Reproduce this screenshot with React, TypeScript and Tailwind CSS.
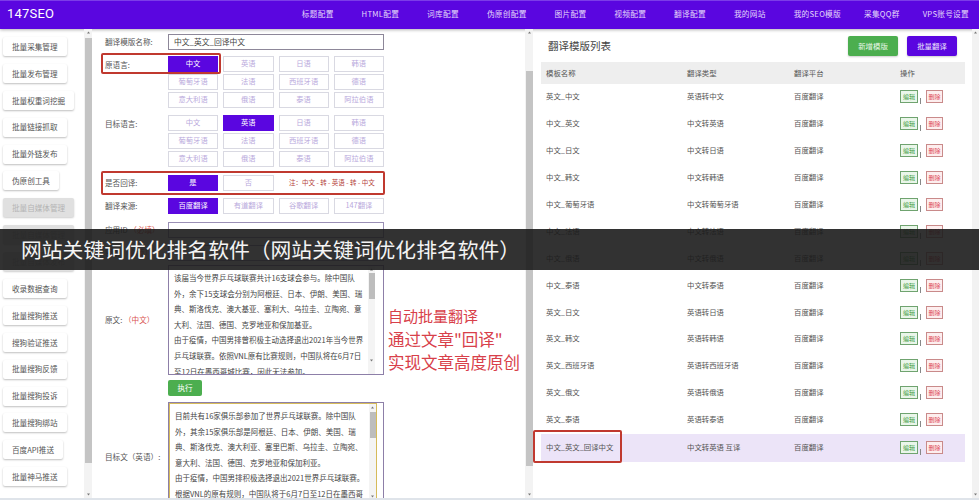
const navItems = [
  { label: "标题配置", className: "" },
  { label: "HTML配置", className: "" },
  { label: "词库配置", className: "" },
  { label: "伪原创配置", className: "" },
  { label: "图片配置", className: "" },
  { label: "视频配置", className: "" },
  { label: "翻译配置", className: "" },
  { label: "我的网站", className: "" },
  { label: "我的SEO模版", className: "" },
  { label: "采集QQ群", className: "-ml-[5px]" },
  { label: "VPS账号设置", className: "-ml-[5px]" },
]

const sideItems = [
  { label: "批量采集管理" },
  { label: "批量发布管理" },
  { label: "批量权重词挖掘" },
  { label: "批量链接抓取" },
  { label: "批量外链发布" },
  { label: "伪原创工具" },
  { label: "批量自媒体管理", off: true },
  { label: "批量自媒体管理", off: true },
  { label: "批量自媒体发布", off: true },
  { label: "收录数据查询" },
  { label: "批量搜狗推送" },
  { label: "搜狗验证推送" },
  { label: "批量搜狗反馈" },
  { label: "批量搜狗投诉" },
  { label: "批量搜狗绑站" },
  { label: "百度API推送" },
  { label: "批量神马推送" },
]

const langs = ["中文", "英语", "日语", "韩语", "葡萄牙语", "法语", "西班牙语", "德语", "意大利语", "俄语", "泰语", "阿拉伯语"]

const rows = [
  ["英文_中文", "英语转中文"],
  ["中文_英文", "中文转英语"],
  ["中文_日文", "中文转日语"],
  ["中文_韩文", "中文转韩语"],
  ["中文_葡萄牙语", "中文转葡萄牙语"],
  ["中文_法语", "中文转法语"],
  ["中文_俄语", "中文转俄语"],
  ["中文_泰语", "中文转泰语"],
  ["英文_日文", "英语转日语"],
  ["英文_韩文", "英语转韩语"],
  ["英文_西班牙语", "英语转西班牙语"],
  ["英文_俄文", "英语转俄语"],
  ["英文_泰语", "英语转泰语"],
  ["中文_英文_回译中文", "中文转英语 互译"],
]

const sourceText = [
  "该届当今世界乒乓球联赛共计16支球会参与。除中国队",
  "外，余下15支球会分别为阿根廷、日本、伊朗、美国、瑞",
  "典、斯洛伐克、澳大基亚、塞利大、乌拉圭、立陶宛、意",
  "大利、法国、德国、克罗地亚和保加基亚。",
  "由于疫情，中国男排曾积极主动选择退出2021年当今世界",
  "乒乓球联赛。依照VNL原有比赛规则，中国队将在6月7日",
  "至12日在墨西哥城比赛，因此无法参加。",
]

const targetText = [
  "目前共有16家俱乐部参加了世界乒乓球联赛。除中国队",
  "外，其余15家俱乐部是阿根廷、日本、伊朗、美国、瑞",
  "典、斯洛伐克、澳大利亚、塞里巴斯、乌拉圭、立陶宛、",
  "意大利、法国、德国、克罗地亚和保加利亚。",
  "由于疫情，中国男排积极选择退出2021世界乒乓球联赛。",
  "根据VNL的原有规则，中国队将于6月7日至12日在墨西哥",
]

const Arrow = ({ down = false }: { down?: boolean }) => (
  <svg width="7" height="7" viewBox="0 0 7 7" className="shrink-0">
    <path d={down ? "M2 2.5h3L3.5 4.5z" : "M2 4.5h3L3.5 2.5z"} fill="#777" />
  </svg>
)

const Scrollbar = ({ top, height }: { top: number; height: number }) => (
  <div className="w-[8px] shrink-0 h-full bg-[#f3f3f3] flex flex-col items-center">
    <Arrow />
    <div className="w-[7px] bg-[#c4c4c4] shrink-0" style={{ marginTop: top, height }} />
    <div className="mt-auto">
      <Arrow down />
    </div>
  </div>
)

const OptionButton = ({ label, active = false }: { label: string; active?: boolean }) => (
  <div
    className={
      active
        ? "h-[15.5px] flex items-center justify-center bg-[#5a06e0] text-white text-[7.3px]"
        : "h-[15.5px] flex items-center justify-center border border-[#d9d9e2] text-[#b9a9dc] text-[7.3px]"
    }
  >
    {label}
  </div>
)

const LangGrid = ({ active }: { active: string }) => (
  <div className="grid grid-cols-4 w-[216px] gap-x-[5px] gap-y-[2.5px]">
    {langs.map((lang) => (
      <OptionButton key={lang} label={lang} active={lang === active} />
    ))}
  </div>
)

const Label = ({ children }: { children: React.ReactNode }) => (
  <div className="w-[63px] shrink-0 text-[7.6px] text-[#555] whitespace-nowrap">{children}</div>
)

const TextLines = ({ lines }: { lines: string[] }) => (
  <div className="flex-1 pl-[5px] pt-[4px] overflow-hidden">
    {lines.map((line) => (
      <div key={line} className="h-[15.6px] leading-[15.6px] text-[7.5px] text-[#444] whitespace-nowrap">
        {line}
      </div>
    ))}
  </div>
)

const MiniScroll = ({ top, height }: { top: number; height: number }) => (
  <div className="w-[7px] shrink-0 h-full flex flex-col items-center bg-[#f4f4f4]">
    <Arrow />
    <div className="w-[6px] bg-[#bdbdbd] shrink-0" style={{ marginTop: top, height }} />
    <div className="mt-auto mb-[10px]">
      <Arrow down />
    </div>
  </div>
)

export default function App() {
  return (
    <div className="relative w-[979px] h-[500px] overflow-hidden bg-white font-['Noto_Sans_CJK_SC','Noto_Sans',sans-serif]">
      <header className="h-[29px] pb-[3px] bg-[#5a06e0] flex items-center border-t border-[#7c3ce8] shadow-[0_1px_3px_rgba(0,0,0,0.3)]">
        <div className="ml-[7px] text-[13px] text-white font-['Roboto',sans-serif] tracking-[0.2px]">147SEO</div>
        <nav className="ml-auto mr-[10px] flex gap-[28px]">
          {navItems.map((item) => (
            <span key={item.label} className={`text-[7.7px] tracking-[0.25px] text-[#e4d8fa] whitespace-nowrap ${item.className}`}>
              {item.label}
            </span>
          ))}
        </nav>
      </header>

      <div className="flex h-[471px] border-b-2 border-[#dfe4ea]">
        <aside className="w-[84px] shrink-0 pt-[8px] pl-[3px] flex flex-col items-start gap-[7.9px] overflow-hidden">
          {sideItems.map((item, i) => (
            <div
              key={i}
              className={
                item.off
                  ? "h-[19px] shrink-0 px-[9px] flex items-center rounded-[2px] bg-[#e0e0e0] text-[#b4b4b4] text-[7.6px] whitespace-nowrap shadow-[0_1px_2px_rgba(0,0,0,0.2)]"
                  : "h-[19px] shrink-0 px-[9px] flex items-center rounded-[2px] bg-white text-[#555] text-[7.6px] whitespace-nowrap shadow-[0_1px_2px_rgba(0,0,0,0.25)]"
              }
            >
              {item.label}
            </div>
          ))}
        </aside>
        <Scrollbar top={2} height={425} />

        <main className="w-[433px] shrink-0 pl-[13px] pt-[5px] overflow-hidden">
          <div className="flex items-center">
            <Label>翻译模版名称:</Label>
            <div className="w-[216px] h-[16px] border border-[#8d8799] flex items-center pl-[5px] text-[7.8px] text-[#444]">
              中文_英文_回译中文
            </div>
          </div>
          <div className="flex mt-[6px]">
            <div className="pt-[3px]">
              <Label>原语言:</Label>
            </div>
            <LangGrid active="中文" />
          </div>
          <div className="flex mt-[7.5px]">
            <div className="pt-[3px]">
              <Label>目标语言:</Label>
            </div>
            <LangGrid active="英语" />
          </div>
          <div className="flex items-center mt-[8.5px]">
            <Label>是否回译:</Label>
            <div className="w-[50px]">
              <OptionButton label="是" active />
            </div>
            <div className="w-[51px] ml-[5px]">
              <OptionButton label="否" />
            </div>
            <span className="ml-[15px] text-[6.5px] text-[#b5443c] whitespace-nowrap">注：中文 - 转 - 英语 - 转 - 中文</span>
          </div>
          <div className="flex items-center mt-[7.5px]">
            <Label>翻译来源:</Label>
            <div className="grid grid-cols-4 w-[216px] gap-x-[5px]">
              <OptionButton label="百度翻译" active />
              <OptionButton label="有道翻译" />
              <OptionButton label="谷歌翻译" />
              <OptionButton label="147翻译" />
            </div>
          </div>
          <div className="flex items-center mt-[8.5px]">
            <Label>
              应用ID <span className="text-[#d9534f]">（必填）</span>
            </Label>
            <div className="w-[216px] h-[16px] border border-[#9a8fb5]" />
          </div>
          <div className="flex items-center mt-[7px]">
            <Label>
              密钥 <span className="text-[#d9534f]">（必填）</span>
            </Label>
            <div className="w-[216px] h-[16px] border border-[#9a8fb5]" />
          </div>
          <div className="flex items-center mt-[4px]">
            <Label>
              原文: <span className="text-[#d9534f]">（中文）</span>
            </Label>
            <div className="w-[216px] h-[110px] border border-[#8d7fa8] flex pr-[8px] overflow-hidden">
              <TextLines lines={sourceText} />
              <MiniScroll top={0} height={26} />
            </div>
            <div className="ml-[4px] self-end mb-[1px] text-[#d8404a] whitespace-nowrap">
              <div className="text-[15px] leading-[24px]">自动批量翻译</div>
              <div className="text-[16.5px] leading-[23px]">通过文章"回译"</div>
              <div className="text-[16.5px] leading-[23px]">实现文章高度原创</div>
            </div>
          </div>
          <div className="ml-[63px] mt-[5px] w-[34px] h-[16px] rounded-[2px] bg-[#4cae4f] text-white text-[7.6px] flex items-center justify-center">
            执行
          </div>
          <div className="flex items-center mt-[6px]">
            <Label>目标文（英语）:</Label>
            <div className="w-[216px] h-[110px] border border-[#8d7fa8] overflow-hidden">
              <div className="w-[208px] h-full border border-[#d6bb5a] flex overflow-hidden">
                <TextLines lines={targetText} />
                <MiniScroll top={1} height={26} />
              </div>
            </div>
          </div>
        </main>
        <Scrollbar top={35} height={395} />

        <section className="flex-1 min-w-0 pl-[8px] flex">
          <div className="w-[424px] shrink-0">
            <div className="flex items-center h-[33px] pt-[1px]">
              <h2 className="ml-[7px] text-[10.5px] text-[#444]">翻译模版列表</h2>
              <button className="ml-auto w-[50px] h-[20px] rounded-[2px] bg-[#4cae4f] text-[#e8f6e8] text-[7.4px] shadow-[0_1px_2px_rgba(0,0,0,0.2)]">
                新增模版
              </button>
              <button className="ml-[9px] mr-[8px] w-[50px] h-[20px] rounded-[2px] bg-[#5a06e0] text-[#eee6fc] text-[7.4px] shadow-[0_1px_2px_rgba(0,0,0,0.2)]">
                批量翻译
              </button>
            </div>
            <div className="grid grid-cols-[141px_107px_106px_70px] h-[22px] items-center bg-[#eeeeee] pl-[5px] text-[7.4px] text-[#555]">
              <span>模板名称</span>
              <span>翻译类型</span>
              <span>翻译平台</span>
              <span>操作</span>
            </div>
            {rows.map(([name, type], i) => (
              <div
                key={name}
                className={
                  i === rows.length - 1
                    ? "grid grid-cols-[141px_107px_106px_70px] h-[28px] pb-[3px] items-center bg-[#ece4f8] pl-[5px] text-[7.4px] text-[#555]"
                    : "grid grid-cols-[141px_107px_106px_70px] h-[26.9px] pb-[3px] items-center pl-[5px] text-[7.4px] text-[#555]"
                }
              >
                <span className="whitespace-nowrap">{name}</span>
                <span className="whitespace-nowrap">{type}</span>
                <span>百度翻译</span>
                <span className="flex items-end mt-[2px]">
                  <span className="w-[18px] h-[13px] border border-[#6fa36f] bg-[#eaf6ea] text-[#3c9a40] text-[6px] flex items-center justify-center">
                    编辑
                  </span>
                  <span className="w-[6px] h-[6px] border-l border-[#888] ml-[2px] -mb-[1px]" />
                  <span className="w-[17px] h-[13px] border border-[#c98a8a] bg-[#fdeeee] text-[#de4a58] text-[6px] flex items-center justify-center">
                    删除
                  </span>
                </span>
              </div>
            ))}
          </div>
          <div className="ml-auto w-[7px] bg-[#f2f2f2] flex flex-col justify-between">
            <Arrow />
            <Arrow down />
          </div>
        </section>
      </div>

      {/* red marks and the caption lie over the page */}
      <div className="absolute left-[101px] top-[53px] w-[120px] h-[21px] border-2 border-[#c0392f] rounded-[2px]" />
      <div className="absolute left-[101px] top-[171px] w-[284px] h-[24px] border-2 border-[#c0392f] rounded-[2px]" />
      <div className="absolute left-[533px] top-[430px] w-[89px] h-[33px] border-2 border-[#c0392f] rounded-[2px]" />
      <div className="absolute left-0 right-0 top-[229px] h-[41px] bg-[#1c1c1c]/90 flex items-center pl-[21px] text-[20.8px] text-[#f4f4f4] whitespace-nowrap">
        网站关键词优化排名软件（网站关键词优化排名软件）
      </div>
    </div>
  )
}
